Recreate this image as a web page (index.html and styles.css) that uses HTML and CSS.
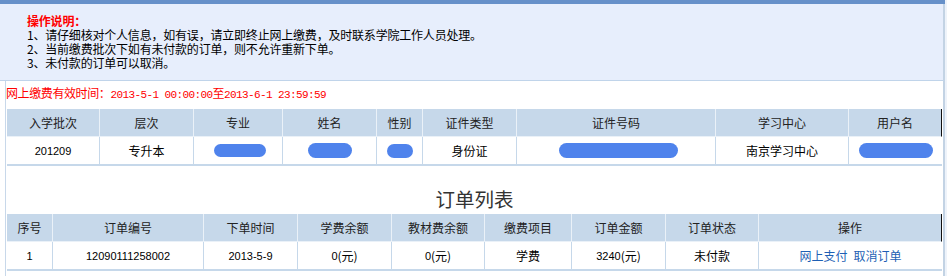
FILE: index.html
```html
<!DOCTYPE html>
<html lang="zh-CN">
<head>
<meta charset="utf-8">
<title>网上缴费</title>
<link rel="stylesheet" href="styles.css">
</head>
<body>
<div class="page">
  <div class="topbar"></div>
  <div class="notice">
    <p class="notice-title"><span>操作说明：</span></p>
    <p><span>1、请仔细核对个人信息，如有误，请立即终止网上缴费，及时联系学院工作人员处理。</span></p>
    <p><span>2、当前缴费批次下如有未付款的订单，则不允许重新下单。</span></p>
    <p><span>3、未付款的订单可以取消。</span></p>
  </div>
  <div class="main">
    <div class="valid">网上缴费有效时间：<span class="mono">2013-5-1 00:00:00</span>至<span class="mono">2013-6-1 23:59:59</span></div>

    <div class="grid info">
      <div class="row head">
        <div class="cell">入学批次</div>
        <div class="cell">层次</div>
        <div class="cell">专业</div>
        <div class="cell">姓名</div>
        <div class="cell">性别</div>
        <div class="cell">证件类型</div>
        <div class="cell">证件号码</div>
        <div class="cell">学习中心</div>
        <div class="cell">用户名</div>
      </div>
      <div class="row data">
        <div class="cell num">201209</div>
        <div class="cell">专升本</div>
        <div class="cell"><span class="blob b-major"></span></div>
        <div class="cell"><span class="blob b-name"></span></div>
        <div class="cell"><span class="blob b-sex"></span></div>
        <div class="cell">身份证</div>
        <div class="cell"><span class="blob b-id"></span></div>
        <div class="cell">南京学习中心</div>
        <div class="cell"><span class="blob b-user"></span></div>
      </div>
    </div>

    <div class="title">订单列表</div>

    <div class="grid orders">
      <div class="row head">
        <div class="cell">序号</div>
        <div class="cell">订单编号</div>
        <div class="cell">下单时间</div>
        <div class="cell">学费余额</div>
        <div class="cell">教材费余额</div>
        <div class="cell">缴费项目</div>
        <div class="cell">订单金额</div>
        <div class="cell">订单状态</div>
        <div class="cell">操作</div>
      </div>
      <div class="row data">
        <div class="cell num">1</div>
        <div class="cell num">12090111258002</div>
        <div class="cell num">2013-5-9</div>
        <div class="cell"><span class="num">0</span>(元)</div>
        <div class="cell"><span class="num">0</span>(元)</div>
        <div class="cell">学费</div>
        <div class="cell"><span class="num">3240</span>(元)</div>
        <div class="cell">未付款</div>
        <div class="cell links"><a href="#">网上支付</a><a href="#">取消订单</a></div>
      </div>
    </div>
  </div>
</div>
</body>
</html>
```

FILE: styles.css
```css
html, body {
  margin: 0;
  padding: 0;
}
body {
  background: #eef3fa;
  font-family: "Noto Sans CJK SC", "Liberation Sans", sans-serif;
  font-size: 12px;
  color: #000;
}
.page {
  width: 945px;
  height: 276px;
  background: #fff;
}
.topbar {
  height: 4px;
  background: #6690c9;
}
.notice {
  background: #e7eefc;
  border-right: 2px solid #c3d3e4;
  border-bottom: 1px solid #c0d4ea;
  padding: 10px 0 10px 27px;
}
.notice p {
  margin: 0;
  height: 14px;
  line-height: 14px;
  letter-spacing: -0.2px;
}
.notice p span {
  display: inline-block;
  height: 14px;
  line-height: 14px;
  vertical-align: top;
}
.notice .notice-title {
  color: #f00;
  font-weight: bold;
}
.main {
  margin-left: 5px;
  border-left: 1px solid #c8d8ea;
  border-right: 2px solid #c3d3e4;
  padding: 0 1px;
  height: 195px;
}
.valid {
  color: #f00;
  height: 28px;
  box-sizing: border-box;
  padding-top: 5px;
  line-height: 14px;
  margin-left: -1px;
  letter-spacing: -0.4px;
}
.mono {
  font-family: "Liberation Mono", monospace;
  font-size: 11px;
  letter-spacing: -0.6px;
}
.grid {
  width: 935px;
}
.row {
  display: grid;
}
.info .row {
  grid-template-columns: 93px 94px 89px 94px 46px 94px 199px 133px 93px;
}
.orders .row {
  grid-template-columns: 46px 151px 94px 94px 93px 87px 94px 93px 183px;
}
.cell {
  display: flex;
  align-items: center;
  justify-content: center;
  border-right: 1px solid #c6d8ea;
  box-sizing: border-box;
  white-space: nowrap;
}
.head .cell {
  background: #c6d8ea;
  border-right-color: #eaf1f8;
  color: #222;
  height: 28px;
  border-bottom: 1px solid #eaf1f8;
}
.head .cell:last-child {
  border-right-color: #111;
}
.data .cell {
  height: 29px;
  border-bottom: 2px solid #c6d8ea;
}
.data .cell:last-child {
  border-right: none;
}
.num {
  font-family: "Liberation Sans", sans-serif;
  font-size: 11px;
}
.blob {
  display: block;
  background: #4f83ec;
  border-radius: 8px;
  filter: blur(0.4px);
}
.b-major { width: 52px; height: 13px; margin-left: 3px; }
.b-name { width: 44px; height: 15px; margin-left: 0; }
.b-sex { width: 26px; height: 14px; }
.b-id { width: 119px; height: 15px; margin-left: 4px; }
.b-user { width: 74px; height: 15px; margin-left: 0; }
.title {
  height: 48px;
  box-sizing: border-box;
  padding-top: 23px;
  line-height: 20px;
  font-size: 19.5px;
  text-align: center;
  color: #333;
  font-family: "Noto Sans CJK SC", sans-serif;
}
.links a {
  color: #1e5fb4;
  text-decoration: none;
  margin: 0 3px;
}
```
